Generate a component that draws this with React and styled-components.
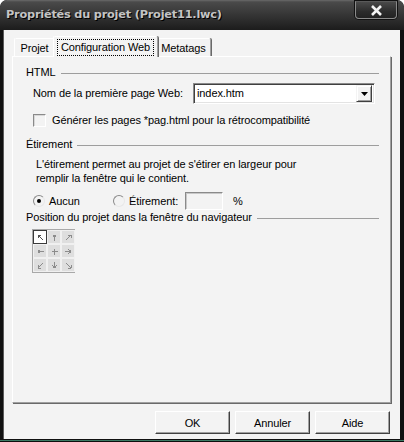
import React from 'react';
import styled, { createGlobalStyle } from 'styled-components';

const Global = createGlobalStyle`
  html, body { margin: 0; padding: 0; background: #ffffff; }
  body { font-family: "Liberation Sans", Arial, sans-serif; font-size: 11px; letter-spacing: -0.1px; color: #000; }
  * { box-sizing: border-box; }
`;

const Window = styled.div`
  width: 404px;
  height: 442px;
  display: flex;
  flex-direction: column;
  padding: 0 4px 3px 3px;
  border-radius: 7px 7px 0 0;
  overflow: hidden;
  background: linear-gradient(to top, #0e0e0e 0 1px, #3b7a64 1px 2px, #101010 2px 100%);
`;

const TitleBar = styled.div`
  height: 30px;
  margin: 0 -4px 0 -3px;
  padding: 0 7px 0 6px;
  display: flex;
  justify-content: space-between;
  align-items: flex-start;
  background: linear-gradient(to bottom, #6a6a6a 0, #4a4a4a 2px, #3a3a3a 12px, #262626 24px, #1c1c1c 30px);
  border-radius: 7px 7px 0 0;
`;

const Title = styled.div`
  margin-top: 8px;
  font-family: "DejaVu Sans", Verdana, sans-serif;
  font-weight: bold;
  font-size: 11.3px;
  letter-spacing: -0.2px;
  color: #c4c4c4;
  text-shadow: 1px 1px 0 #000;
`;

const CloseButton = styled.div`
  width: 42px;
  height: 18px;
  margin-top: 1px;
  display: flex;
  align-items: center;
  justify-content: center;
  border: 1px solid #8a8a8a;
  border-top-color: #5a5a5a;
  border-radius: 0 0 4px 4px;
  background: linear-gradient(to bottom, #4a4a4a, #2c2c2c 60%, #222);
  box-shadow: 0 0 0 1px #111;
`;

const Client = styled.div`
  flex: 1;
  display: flex;
  flex-direction: column;
  background: #f3f3f3;
  border-left: 1px solid #5a5a5a;
  padding: 6px 9px 0 8px;
`;

const TabRow = styled.div`
  display: flex;
  align-items: flex-start;
  padding-left: 2px;
  height: 20px;
  position: relative;
  z-index: 2;
`;

const Tab = styled.div`
  width: ${p => p.$w}px;
  height: ${p => (p.$active ? 21 : 18)}px;
  margin-top: ${p => (p.$active ? 0 : 2)}px;
  margin-left: ${p => (p.$active ? -2 : 0)}px;
  margin-right: ${p => (p.$active ? -2 : 0)}px;
  display: flex;
  align-items: center;
  justify-content: center;
  background: #f3f3f3;
  border-top: 1px solid #ffffff;
  border-left: 1px solid #ffffff;
  border-right: 1px solid #a0a0a0;
  box-shadow: 1px 0 0 #696969;
  border-radius: 2px 2px 0 0;
  position: relative;
  z-index: ${p => (p.$active ? 2 : 1)};
  padding-top: ${p => (p.$active ? 0 : 1)}px;
`;

const FocusLabel = styled.span`
  border: 1px dotted #000;
  padding: 1px 3px 1px 3px;
  line-height: 13px;
`;

const Panel = styled.div`
  height: 347px;
  display: flex;
  flex-direction: column;
  border-top: 1px solid #ffffff;
  border-left: 1px solid #ffffff;
  border-right: 1px solid #a0a0a0;
  border-bottom: 1px solid #a0a0a0;
  box-shadow: 1px 1px 0 #696969;
  padding: 9px 11px 0 13px;
  width: 379px;
`;

const GroupHeader = styled.div`
  display: flex;
  align-items: center;
  gap: 5px;
  line-height: 13px;
  margin-top: ${p => p.$mt || 0}px;
  &::after {
    content: '';
    flex: 1;
    height: 1px;
    background: #9d9d9d;
    margin-top: 1px;
  }
`;

const Row = styled.div`
  display: flex;
  align-items: center;
  margin-top: ${p => p.$mt || 0}px;
  padding-left: ${p => p.$indent || 0}px;
  line-height: 13px;
`;

const FieldLabel = styled.span`
  width: 160px;
`;

const Combo = styled.div`
  width: 182px;
  height: 21px;
  display: flex;
  align-items: center;
  background: #fff;
  border-top: 1px solid #8a8a8a;
  border-left: 1px solid #8a8a8a;
  border-right: 1px solid #ffffff;
  border-bottom: 1px solid #ffffff;
  box-shadow: inset 1px 1px 0 #404040, inset -1px -1px 0 #e3e3e3;
  padding: 2px 2px 2px 3px;
`;

const ComboText = styled.span`
  flex: 1;
`;

const DropButton = styled.div`
  width: 16px;
  height: 17px;
  display: flex;
  align-items: center;
  justify-content: center;
  background: #f3f3f3;
  border-top: 1px solid #f3f3f3;
  border-left: 1px solid #f3f3f3;
  border-right: 1px solid #404040;
  border-bottom: 1px solid #404040;
  box-shadow: inset 1px 1px 0 #fff, inset -1px -1px 0 #a0a0a0;
`;

const Check = styled.span`
  width: 13px;
  height: 13px;
  margin-right: 6px;
  background: #f3f3f3;
  border-top: 1px solid #8a8a8a;
  border-left: 1px solid #8a8a8a;
  border-right: 1px solid #ffffff;
  border-bottom: 1px solid #ffffff;
  box-shadow: inset 1px 1px 0 #d8d8d8;
`;

const Paragraph = styled.p`
  margin: ${p => p.$mt || 0}px 0 0 10px;
  line-height: 14px;
`;

const Radio = styled.span`
  width: 12px;
  height: 12px;
  border-radius: 50%;
  margin-right: 4px;
  display: flex;
  align-items: center;
  justify-content: center;
  background: #f3f3f3;
  border: 1px solid;
  border-color: #8a8a8a #e8e8e8 #e8e8e8 #8a8a8a;
  &::after {
    content: '';
    display: ${p => (p.$on ? 'block' : 'none')};
    width: 4px;
    height: 4px;
    border-radius: 50%;
    background: #000;
  }
`;

const RadioLabel = styled.span`
  width: ${p => p.$w}px;
`;

const SmallInput = styled.span`
  width: 38px;
  height: 18px;
  margin-right: 10px;
  background: #f3f3f3;
  border-top: 1px solid #8a8a8a;
  border-left: 1px solid #8a8a8a;
  border-right: 1px solid #ffffff;
  border-bottom: 1px solid #ffffff;
  box-shadow: inset 1px 1px 0 #c8c8c8;
`;

const Grid = styled.div`
  margin: 5px 0 0 6px;
  width: 43px;
  display: grid;
  grid-template-columns: repeat(3, 14px);
  grid-auto-rows: 14px;
  gap: 0;
  border: 1px solid #a8a8a8;
  background: #a8a8a8;
`;

const Cell = styled.div`
  display: flex;
  align-items: center;
  justify-content: center;
  background: ${p => (p.$sel ? '#ffffff' : '#dedede')};
  border: 1px solid ${p => (p.$sel ? '#3a3a3a' : '#f0f0f0')};
  color: ${p => (p.$sel ? '#505050' : '#8c8c8c')};
`;

const ButtonRow = styled.div`
  display: flex;
  justify-content: flex-end;
  gap: 5px;
  margin-top: 8px;
  padding-right: 1px;
`;

const Button = styled.div`
  width: 75px;
  height: 23px;
  display: flex;
  align-items: center;
  justify-content: center;
  background: #f3f3f3;
  border-top: 1px solid #ffffff;
  border-left: 1px solid #ffffff;
  border-right: 1px solid #404040;
  border-bottom: 1px solid #404040;
  box-shadow: inset -1px -1px 0 #a0a0a0;
`;

const arrows = [
  'M1 1 L6 6 M1 1 L1 4 M1 1 L4 1',
  'M3.5 1 L3.5 7 M3.5 1 L1.5 3.5 M3.5 1 L5.5 3.5',
  'M6 1 L1 6 M6 1 L3 1 M6 1 L6 4',
  'M1 3.5 L7 3.5 M1 3.5 L3.5 1.5 M1 3.5 L3.5 5.5',
  'M3.5 0.5 L3.5 6.5 M0.5 3.5 L6.5 3.5',
  'M6 3.5 L0 3.5 M6 3.5 L3.5 1.5 M6 3.5 L3.5 5.5',
  'M1 6 L6 1 M1 6 L1 3 M1 6 L4 6',
  'M3.5 6 L3.5 0 M3.5 6 L1.5 3.5 M3.5 6 L5.5 3.5',
  'M6 6 L1 1 M6 6 L3 6 M6 6 L6 3',
];

function Arrow({ d }) {
  return (
    <svg width="7" height="7" viewBox="0 0 7 7">
      <path d={d} stroke="currentColor" strokeWidth="1" fill="none" shapeRendering="crispEdges" />
    </svg>
  );
}

export default function App() {
  return (
    <>
      <Global />
      <Window>
        <TitleBar>
          <Title>Propriétés du projet (Projet11.lwc)</Title>
          <CloseButton>
            <svg width="13" height="11" viewBox="0 0 13 11">
              <path d="M2 1 L11 10 M11 1 L2 10" stroke="#f4f4f4" strokeWidth="2.6" />
            </svg>
          </CloseButton>
        </TitleBar>
        <Client>
          <TabRow>
            <Tab $w={41}>Projet</Tab>
            <Tab $w={105} $active>
              <FocusLabel>Configuration Web</FocusLabel>
            </Tab>
            <Tab $w={55}>Metatags</Tab>
          </TabRow>
          <Panel>
            <GroupHeader>HTML</GroupHeader>
            <Row $mt={4} $indent={7}>
              <FieldLabel>Nom de la première page Web:</FieldLabel>
              <Combo>
                <ComboText>index.htm</ComboText>
                <DropButton>
                  <svg width="7" height="4" viewBox="0 0 7 4">
                    <path d="M0 0 H7 L3.5 4 Z" fill="#000" />
                  </svg>
                </DropButton>
              </Combo>
            </Row>
            <Row $mt={10} $indent={7}>
              <Check />
              <span>Générer les pages *pag.html pour la rétrocompatibilité</span>
            </Row>
            <GroupHeader $mt={11}>Étirement</GroupHeader>
            <Paragraph $mt={6}>
              L'étirement permet au projet de s'étirer en largeur pour
              <br />
              remplir la fenêtre qui le contient.
            </Paragraph>
            <Row $mt={7} $indent={7}>
              <Radio $on />
              <RadioLabel $w={64}>Aucun</RadioLabel>
              <Radio />
              <RadioLabel $w={56}>Étirement:</RadioLabel>
              <SmallInput />
              <span>%</span>
            </Row>
            <GroupHeader $mt={1}>Position du projet dans la fenêtre du navigateur</GroupHeader>
            <Grid>
              {arrows.map((d, i) => (
                <Cell key={i} $sel={i === 0}>
                  <Arrow d={d} />
                </Cell>
              ))}
            </Grid>
          </Panel>
          <ButtonRow>
            <Button>OK</Button>
            <Button>Annuler</Button>
            <Button>Aide</Button>
          </ButtonRow>
        </Client>
      </Window>
    </>
  );
}
